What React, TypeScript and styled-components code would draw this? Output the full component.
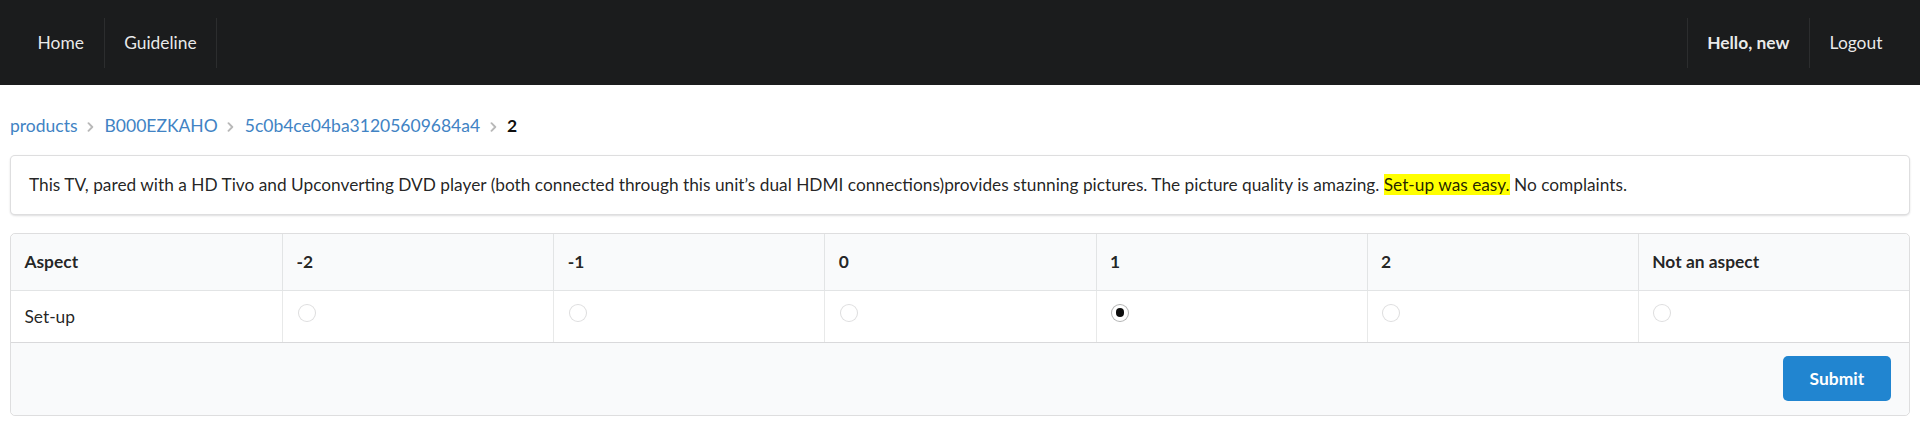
import React from "react";
import styled, { createGlobalStyle } from "styled-components";

const GlobalStyle = createGlobalStyle`
  html, body {
    margin: 0;
    padding: 0;
    background: #ffffff;
  }
  body {
    font-family: Lato, "Helvetica Neue", Arial, Helvetica, sans-serif;
    font-size: 17.3px;
    line-height: 24px;
    color: rgba(0, 0, 0, 0.87);
  }
  * { box-sizing: border-box; }
`;

const NavBar = styled.nav`
  display: flex;
  align-items: center;
  justify-content: space-between;
  height: 85px;
  padding: 0 18px;
  background: #1b1c1d;
`;

const NavGroup = styled.div`
  display: flex;
  align-items: center;
`;

const NavItem = styled.a<{ $side: "left" | "right"; $bold?: boolean }>`
  display: flex;
  align-items: center;
  height: 50px;
  padding: 0 19.6px;
  color: rgba(255, 255, 255, 0.92);
  font-size: 17.4px;
  font-weight: ${(p) => (p.$bold ? 700 : 400)};
  text-decoration: none;
  cursor: pointer;
  ${(p) =>
    p.$side === "left"
      ? "border-right: 1px solid rgba(255, 255, 255, 0.08);"
      : "border-left: 1px solid rgba(255, 255, 255, 0.08);"}
`;

const Main = styled.main`
  padding: 29px 10px 10px;
`;

const Breadcrumb = styled.div`
  display: flex;
  align-items: center;
  height: 24px;
  font-size: 17.5px;
  line-height: 24px;
`;

const Crumb = styled.a`
  color: #4183c4;
  text-decoration: none;
  cursor: pointer;
`;

const ActiveCrumb = styled.span`
  color: rgba(0, 0, 0, 0.95);
  font-weight: 700;
`;

const DividerIcon = styled.svg`
  display: block;
  width: 7px;
  height: 10px;
  margin: 1px 10.5px 0 9.5px;
`;

const Segment = styled.div`
  margin-top: 17px;
  padding: 17px 17px 17px 18px;
  border: 1px solid rgba(34, 36, 38, 0.15);
  border-radius: 5px;
  box-shadow: 0 1px 2px 0 rgba(34, 36, 38, 0.15);
  font-size: 17.3px;
  line-height: 24px;
  background: #fff;
`;

const Highlight = styled.span`
  background: #ffff00;
`;

const Table = styled.table`
  width: 100%;
  margin-top: 18px;
  table-layout: fixed;
  border: 1px solid rgba(34, 36, 38, 0.15);
  border-radius: 5px;
  border-collapse: separate;
  border-spacing: 0;
  font-size: 17.4px;
  line-height: 24px;
  color: rgba(0, 0, 0, 0.87);
`;

const HeadCell = styled.th<{ $first?: boolean }>`
  padding: 16px 13.4px;
  text-align: left;
  font-weight: 700;
  background: #f9fafb;
  border-bottom: 1px solid rgba(34, 36, 38, 0.1);
  border-left: ${(p) => (p.$first ? "none" : "1px solid rgba(34, 36, 38, 0.1)")};
  &:first-child { border-top-left-radius: 5px; }
  &:last-child { border-top-right-radius: 5px; }
`;

const BodyCell = styled.td<{ $first?: boolean }>`
  padding: 13.5px 13.4px;
  text-align: left;
  vertical-align: middle;
  border-left: ${(p) => (p.$first ? "none" : "1px solid rgba(34, 36, 38, 0.1)")};
`;

const FootCell = styled.th`
  padding: 13.4px 13.4px;
  background: #f9fafb;
  border-top: 1px solid rgba(34, 36, 38, 0.15);
  border-bottom-left-radius: 5px;
  border-bottom-right-radius: 5px;
`;

const FootBar = styled.div`
  display: flex;
  justify-content: flex-end;
  padding-right: 5px;
`;

const Radio = styled.span<{ $checked?: boolean }>`
  position: relative;
  display: block;
  width: 18px;
  height: 18px;
  margin: -1px 0 7px 1px;
  border-radius: 50%;
  border: 1px solid
    ${(p) => (p.$checked ? "rgba(34, 36, 38, 0.35)" : "rgba(34, 36, 38, 0.15)")};
  background: #fff;
  cursor: pointer;
  &::after {
    content: "";
    display: ${(p) => (p.$checked ? "block" : "none")};
    position: absolute;
    left: 50%;
    top: 50%;
    width: 8.5px;
    height: 8.5px;
    margin: -4.25px 0 0 -4.25px;
    border-radius: 50%;
    background: rgba(0, 0, 0, 0.95);
  }
`;

const SubmitButton = styled.button`
  height: 45px;
  padding: 0 26.5px;
  border: none;
  border-radius: 5px;
  background: #2185d0;
  color: #ffffff;
  font-family: Lato, "Helvetica Neue", Arial, Helvetica, sans-serif;
  font-size: 17.4px;
  font-weight: 700;
  line-height: 17px;
  cursor: pointer;
`;

const Chevron = () => (
  <DividerIcon viewBox="0 0 7 10" aria-hidden="true">
    <path
      d="M1.5 1.2 L5.3 5 L1.5 8.8"
      fill="none"
      stroke="rgba(0,0,0,0.28)"
      strokeWidth="1.9"
      strokeLinecap="round"
      strokeLinejoin="round"
    />
  </DividerIcon>
);

const columns = ["Aspect", "-2", "-1", "0", "1", "2", "Not an aspect"];
const values = ["-2", "-1", "0", "1", "2", "na"];

export default function App() {
  const [selected, setSelected] = React.useState("1");
  return (
    <>
      <GlobalStyle />
      <NavBar>
        <NavGroup>
          <NavItem $side="left">Home</NavItem>
          <NavItem $side="left">Guideline</NavItem>
        </NavGroup>
        <NavGroup>
          <NavItem $side="right" $bold>
            Hello, new
          </NavItem>
          <NavItem $side="right">Logout</NavItem>
        </NavGroup>
      </NavBar>
      <Main>
        <Breadcrumb>
          <Crumb>products</Crumb>
          <Chevron />
          <Crumb>B000EZKAHO</Crumb>
          <Chevron />
          <Crumb>5c0b4ce04ba31205609684a4</Crumb>
          <Chevron />
          <ActiveCrumb>2</ActiveCrumb>
        </Breadcrumb>
        <Segment>
          This TV, pared with a HD Tivo and Upconverting DVD player (both connected through this unit’s
          dual HDMI connections)provides stunning pictures. The picture quality is amazing.{" "}
          <Highlight>Set-up was easy.</Highlight> No complaints.
        </Segment>
        <Table>
          <thead>
            <tr>
              {columns.map((c, i) => (
                <HeadCell key={c} $first={i === 0}>
                  {c}
                </HeadCell>
              ))}
            </tr>
          </thead>
          <tbody>
            <tr>
              <BodyCell $first>Set-up</BodyCell>
              {values.map((v) => (
                <BodyCell key={v}>
                  <Radio $checked={selected === v} onClick={() => setSelected(v)} />
                </BodyCell>
              ))}
            </tr>
          </tbody>
          <tfoot>
            <tr>
              <FootCell colSpan={7}>
                <FootBar>
                  <SubmitButton>Submit</SubmitButton>
                </FootBar>
              </FootCell>
            </tr>
          </tfoot>
        </Table>
      </Main>
    </>
  );
}
